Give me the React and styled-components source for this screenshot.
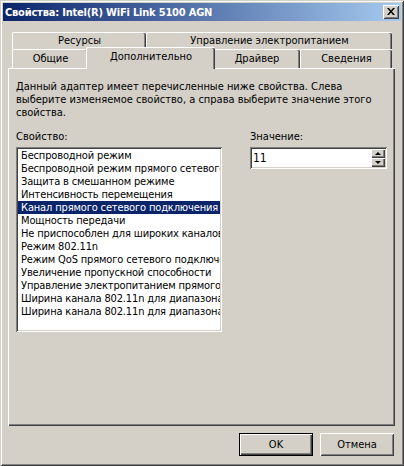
import styled, { createGlobalStyle } from 'styled-components';

const GlobalStyle = createGlobalStyle`
  html, body {
    margin: 0;
    padding: 0;
    background: #d4d0c8;
  }
  body {
    font-family: "DejaVu Sans Condensed", "DejaVu Sans", "Liberation Sans", sans-serif;
    font-size: 11px;
    color: #000;
  }
`;

const properties = [
  'Беспроводной режим',
  'Беспроводной режим прямого сетевого подключения',
  'Защита в смешанном режиме',
  'Интенсивность перемещения',
  'Канал прямого сетевого подключения Wi-Fi',
  'Мощность передачи',
  'Не приспособлен для широких каналов',
  'Режим 802.11n',
  'Режим QoS прямого сетевого подключения',
  'Увеличение пропускной способности',
  'Управление электропитанием прямого подключения',
  'Ширина канала 802.11n для диапазона 2.4 ГГц',
  'Ширина канала 802.11n для диапазона 5.2 ГГц',
];

const backTabs = [
  { label: 'Ресурсы', width: 134 },
  { label: 'Управление электропитанием', width: 246 },
];

const frontTabs = [
  { label: 'Общие', width: 76 },
  { label: 'Дополнительно', width: 125, active: true },
  { label: 'Драйвер', width: 87 },
  { label: 'Сведения', width: 92 },
];

export default function App() {
  return (
    <>
      <GlobalStyle />
      <Window>
        <TitleBar>
          <TitleText>Свойства: Intel(R) WiFi Link 5100 AGN</TitleText>
          <CloseButton>
            <svg width="8" height="7" viewBox="0 0 8 7">
              <path d="M0 0 L2 0 L4 2.4 L6 0 L8 0 L5 3.5 L8 7 L6 7 L4 4.6 L2 7 L0 7 L3 3.5 Z" fill="#000" />
            </svg>
          </CloseButton>
        </TitleBar>
        <Body>
          <TabStrip>
            <TabRow $height={17}>
              {backTabs.map((t) => (
                <Tab key={t.label} $width={t.width}>{t.label}</Tab>
              ))}
            </TabRow>
            <TabRow $height={19}>
              {frontTabs.map((t) => (
                <Tab key={t.label} $width={t.width} $active={t.active}>{t.label}</Tab>
              ))}
            </TabRow>
          </TabStrip>
          <Panel>
            <Description>
              Данный адаптер имеет перечисленные ниже свойства. Слева<br />
              выберите изменяемое свойство, а справа выберите значение этого<br />
              свойства.
            </Description>
            <Columns>
              <Column $width={206}>
                <Label>Свойство:</Label>
                <ListBox>
                  {properties.map((p, i) => (
                    <ListItem key={i} $selected={i === 4}>{p}</ListItem>
                  ))}
                </ListBox>
              </Column>
              <Column $width={137}>
                <Label>Значение:</Label>
                <SpinBox>
                  <SpinValue>11</SpinValue>
                  <SpinButtons>
                    <SpinButton><Arrow $up /></SpinButton>
                    <SpinButton><Arrow /></SpinButton>
                  </SpinButtons>
                </SpinBox>
              </Column>
            </Columns>
          </Panel>
          <Footer>
            <Button $default>OK</Button>
            <Button>Отмена</Button>
          </Footer>
        </Body>
      </Window>
    </>
  );
}

const Window = styled.div`
  width: 404px;
  height: 466px;
  box-sizing: border-box;
  padding: 3px;
  display: flex;
  flex-direction: column;
  background: #d4d0c8;
  box-shadow: inset 1px 1px #d4d0c8, inset -1px -1px #404040,
    inset 2px 2px #fff, inset -2px -2px #808080;
`;

const TitleBar = styled.div`
  height: 18px;
  display: flex;
  align-items: center;
  justify-content: space-between;
  padding-left: 2px;
  background: linear-gradient(to right, #0a246a, #a6caf0);
`;

const TitleText = styled.div`
  color: #fff;
  font-weight: bold;
  font-size: 11px;
  letter-spacing: -0.2px;
  white-space: nowrap;
`;

const CloseButton = styled.div`
  width: 16px;
  height: 14px;
  margin-right: 2px;
  box-sizing: border-box;
  display: flex;
  align-items: center;
  justify-content: center;
  padding-bottom: 1px;
  background: #d4d0c8;
  box-shadow: inset 1px 1px #fff, inset -1px -1px #404040,
    inset 2px 2px #d4d0c8, inset -2px -2px #808080;
`;

const Body = styled.div`
  flex: 1;
  display: flex;
  flex-direction: column;
  padding: 11px 6px 0 5px;
`;

const TabStrip = styled.div`
  display: flex;
  flex-direction: column;
  margin-left: 4px;
  width: 380px;
`;

const TabRow = styled.div`
  height: ${(p) => p.$height}px;
  display: flex;
  align-items: flex-end;
`;

const Tab = styled.div`
  flex: none;
  position: relative;
  z-index: ${(p) => (p.$active ? 1 : 0)};
  width: ${(p) => p.$width + (p.$active ? 4 : 0)}px;
  height: ${(p) => (p.$active ? '22px' : '100%')};
  margin: ${(p) => (p.$active ? '0 -2px -1px -2px' : '0')};
  box-sizing: border-box;
  display: flex;
  align-items: center;
  justify-content: center;
  padding-bottom: ${(p) => (p.$active ? 4 : 1)}px;
  background: #d4d0c8;
  border-top: 1px solid #fff;
  border-left: 1px solid #fff;
  border-radius: 2px 2px 0 0;
  box-shadow: inset -1px 0 #404040, inset -2px 0 #808080;
  white-space: nowrap;
`;

const Panel = styled.div`
  height: 358px;
  box-sizing: border-box;
  padding: 11px 8px 0 7px;
  border-top: 1px solid #fff;
  border-left: 1px solid #fff;
  box-shadow: inset -1px -1px #404040, inset -2px -2px #808080;
  display: flex;
  flex-direction: column;
`;

const Description = styled.div`
  line-height: 13px;
  white-space: nowrap;
`;

const Columns = styled.div`
  display: flex;
  gap: 28px;
  margin-top: 11px;
`;

const Column = styled.div`
  width: ${(p) => p.$width}px;
  display: flex;
  flex-direction: column;
`;

const Label = styled.div`
  line-height: 13px;
  margin-bottom: 4px;
`;

const sunken = `
  background: #fff;
  box-sizing: border-box;
  padding: 2px;
  box-shadow: inset 1px 1px #808080, inset -1px -1px #fff,
    inset 2px 2px #404040, inset -2px -2px #d4d0c8;
`;

const ListBox = styled.div`
  ${sunken}
  height: 185px;
  overflow: hidden;
`;

const ListItem = styled.div`
  height: 13px;
  line-height: 13px;
  padding-left: 3px;
  letter-spacing: -0.15px;
  white-space: nowrap;
  overflow: hidden;
  background: ${(p) => (p.$selected ? '#0a246a' : 'transparent')};
  color: ${(p) => (p.$selected ? '#fff' : '#000')};
`;

const SpinBox = styled.div`
  ${sunken}
  height: 22px;
  display: flex;
  align-items: stretch;
`;

const SpinValue = styled.div`
  flex: 1;
  padding-left: 1px;
  font-size: 12px;
  line-height: 18px;
`;

const SpinButtons = styled.div`
  width: 14px;
  display: flex;
  flex-direction: column;
`;

const SpinButton = styled.div`
  flex: 1;
  display: flex;
  align-items: center;
  justify-content: center;
  background: #d4d0c8;
  box-shadow: inset 1px 1px #fff, inset -1px -1px #404040, inset -2px -2px #808080;
`;

const Arrow = styled.div`
  width: 0;
  height: 0;
  border-left: 3px solid transparent;
  border-right: 3px solid transparent;
  ${(p) => (p.$up ? 'border-bottom: 3px solid #000;' : 'border-top: 3px solid #000;')}
`;

const Footer = styled.div`
  display: flex;
  justify-content: flex-end;
  gap: 7px;
  padding: 7px 1px 0 0;
`;

const Button = styled.div`
  width: 74px;
  height: 23px;
  box-sizing: border-box;
  display: flex;
  align-items: center;
  justify-content: center;
  background: #d4d0c8;
  border: ${(p) => (p.$default ? '1px solid #000' : 'none')};
  box-shadow: ${(p) =>
    p.$default
      ? 'inset 1px 1px #fff, inset -1px -1px #404040, inset -2px -2px #808080'
      : 'inset 1px 1px #fff, inset -1px -1px #404040, inset 2px 2px #d4d0c8, inset -2px -2px #808080'};
`;
